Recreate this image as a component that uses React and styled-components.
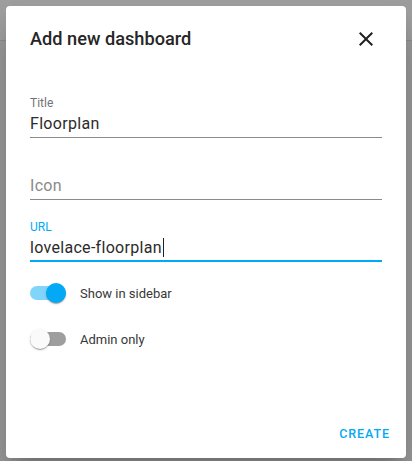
import styled, { createGlobalStyle } from 'styled-components'

const GlobalStyle = createGlobalStyle`
  html, body {
    margin: 0;
    padding: 0;
  }
  body {
    font-family: Roboto, 'Noto Sans', sans-serif;
    background: #9b9b9b;
  }
`

const Backdrop = styled.div`
  width: 412px;
  height: 461px;
  box-sizing: border-box;
  padding: 6px;
  background: linear-gradient(
    to bottom,
    #9e9e9e 0,
    #9e9e9e 40px,
    #8c8c8c 40px,
    #8c8c8c 41px,
    #999999 41px
  );
`

const Dialog = styled.div`
  width: 400px;
  height: 452px;
  background: #ffffff;
  border-radius: 4px;
  box-shadow: 0 11px 15px -7px rgba(0, 0, 0, 0.2),
    0 24px 38px 3px rgba(0, 0, 0, 0.14);
  display: flex;
  flex-direction: column;
`

const Header = styled.div`
  display: flex;
  align-items: center;
  justify-content: space-between;
  padding: 17px 28px 0 24px;
`

const Heading = styled.h2`
  margin: 0;
  font-size: 18.2px;
  line-height: 32px;
  font-weight: 500;
  color: #262626;
`

const CloseButton = styled.button`
  width: 24px;
  height: 24px;
  padding: 0;
  border: none;
  background: none;
  color: #212121;
  display: flex;
  align-items: center;
  justify-content: center;
`

const Body = styled.div`
  padding: 40px 24px 0;
  display: flex;
  flex-direction: column;
  gap: 19px;
`

const Field = styled.div`
  display: flex;
  flex-direction: column;
  padding-bottom: ${(p) => (p.$focused ? '0' : '1px')};
  border-bottom: ${(p) => (p.$focused ? '2px solid #03a9f4' : '1px solid #8a8a8a')};
`

const FieldLabel = styled.div`
  font-size: 12px;
  line-height: 16px;
  height: 16px;
  margin-bottom: 1px;
  color: ${(p) => (p.$focused ? '#03a9f4' : '#737373')};
`

const FieldValue = styled.div`
  font-size: 16px;
  line-height: 24px;
  height: 24px;
  color: ${(p) => (p.$placeholder ? '#8a8a8a' : '#2b2b2b')};
  letter-spacing: 0.3px;
`

const Caret = styled.span`
  display: inline-block;
  width: 1px;
  height: 19px;
  background: #212121;
  vertical-align: -4px;
  margin-left: 1px;
`

const Toggles = styled.div`
  padding: 21px 24px 0;
  display: flex;
  flex-direction: column;
  gap: 26px;
`

const ToggleRow = styled.label`
  display: flex;
  align-items: center;
  gap: 14px;
  height: 20px;
  font-size: 13px;
  color: #383838;
`

const Switch = styled.span`
  position: relative;
  width: 36px;
  height: 20px;
  display: flex;
  align-items: center;
`

const Track = styled.span`
  width: 36px;
  height: 14px;
  border-radius: 7px;
  background: ${(p) => (p.$on ? '#81d4fa' : '#9e9e9e')};
`

const Knob = styled.span`
  position: absolute;
  top: 0;
  left: ${(p) => (p.$on ? '16px' : '0')};
  width: 20px;
  height: 20px;
  border-radius: 50%;
  background: ${(p) => (p.$on ? '#03a9f4' : '#fafafa')};
  box-shadow: 0 2px 1px -1px rgba(0, 0, 0, 0.2), 0 1px 1px 0 rgba(0, 0, 0, 0.14),
    0 1px 3px 0 rgba(0, 0, 0, 0.12);
`

const Footer = styled.div`
  margin-top: auto;
  display: flex;
  justify-content: flex-end;
  padding: 8px 8px 7px;
`

const TextButton = styled.button`
  height: 36px;
  padding: 0 8px;
  border: none;
  background: none;
  font-family: inherit;
  font-size: 12.5px;
  font-weight: 500;
  letter-spacing: 0.9px;
  text-transform: uppercase;
  color: #03a9f4;
`

const Toggle = ({ on, label }) => (
  <ToggleRow>
    <Switch>
      <Track $on={on} />
      <Knob $on={on} />
    </Switch>
    {label}
  </ToggleRow>
)

const App = () => {
  return (
    <>
      <GlobalStyle />
      <Backdrop>
        <Dialog>
          <Header>
            <Heading>Add new dashboard</Heading>
            <CloseButton aria-label="Close">
              <svg width="24" height="24" viewBox="0 0 24 24">
                <path
                  fill="currentColor"
                  d="M19,6.41L17.59,5L12,10.59L6.41,5L5,6.41L10.59,12L5,17.59L6.41,19L12,13.41L17.59,19L19,17.59L13.41,12L19,6.41Z"
                />
              </svg>
            </CloseButton>
          </Header>
          <Body>
            <Field>
              <FieldLabel>Title</FieldLabel>
              <FieldValue>Floorplan</FieldValue>
            </Field>
            <Field>
              <FieldLabel />
              <FieldValue $placeholder>Icon</FieldValue>
            </Field>
            <Field $focused>
              <FieldLabel $focused>URL</FieldLabel>
              <FieldValue>
                lovelace-floorplan
                <Caret />
              </FieldValue>
            </Field>
          </Body>
          <Toggles>
            <Toggle on label="Show in sidebar" />
            <Toggle label="Admin only" />
          </Toggles>
          <Footer>
            <TextButton>Create</TextButton>
          </Footer>
        </Dialog>
      </Backdrop>
    </>
  )
}

export default App
